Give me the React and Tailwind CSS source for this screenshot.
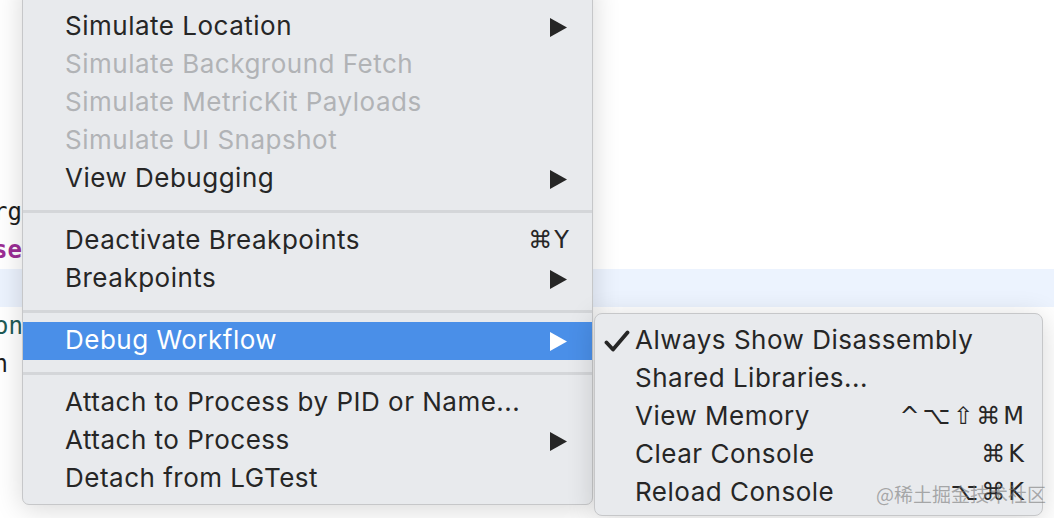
import React from 'react';

function Arrow({ white }) {
  return (
    <svg width="17" height="19" viewBox="0 0 17 19" className="shrink-0">
      <polygon points="0,0 17,9.5 0,19" fill={white ? '#ffffff' : '#262626'} />
    </svg>
  );
}

function Check() {
  return (
    <svg width="26" height="22" viewBox="0 0 26 22" className="shrink-0">
      <path d="M2.5 12.5 L9 19.5 L23.5 2.5" fill="none" stroke="#262626" strokeWidth="3.8" strokeLinecap="round" strokeLinejoin="round" />
    </svg>
  );
}

function MenuRow({ label, disabled, arrow, shortcut, active }) {
  return (
    <div
      className={`flex items-center h-[38px] pl-[42px] pr-[21px] ${active ? 'bg-[#4a8fe8] text-white' : disabled ? 'text-[#b1b3b6]' : 'text-[#262626]'}`}
    >
      <span className="flex-1 whitespace-nowrap pb-[3px]">{label}</span>
      {shortcut && <span className="font-['DejaVu_Sans',sans-serif] text-[24px] tracking-[2px] pb-[2px]">{shortcut}</span>}
      {arrow && <span className="pr-[4px]"><Arrow white={active} /></span>}
    </div>
  );
}

function Separator() {
  return (
    <div className="h-[24px] flex flex-col pt-[12px]">
      <div className="h-[3px] bg-[#d4d6d9]" />
    </div>
  );
}

function SubRow({ label, checked, shortcut }) {
  return (
    <div className="flex items-center h-[38px] pl-[9px] pr-[15px] text-[#262626]">
      <span className="w-[31px] flex">{checked && <Check />}</span>
      <span className="flex-1 whitespace-nowrap pb-[3px]">{label}</span>
      {shortcut && <span className="font-['DejaVu_Sans',sans-serif] text-[24px] tracking-[3px] pb-[2px]">{shortcut}</span>}
    </div>
  );
}

export default function App() {
  return (
    <div className="relative w-[1054px] h-[518px] overflow-hidden bg-white font-['Inter',sans-serif] text-[26px] tracking-[0.5px]">
      {/* Editor behind the menus */}
      <div className="flex flex-col pt-[193px] font-['DejaVu_Sans_Mono',monospace] text-[24px] tracking-normal">
        <div className="h-[38px] flex items-center"><span className="w-[22px] overflow-hidden flex justify-end text-[#1d1d1d]">arg</span></div>
        <div className="h-[38px] flex items-center"><span className="w-[22px] overflow-hidden flex justify-end font-bold text-[#9b2d95]">ase</span></div>
        <div className="h-[38px] bg-[#ecf3fe]" />
        <div className="h-[38px] flex items-center"><span className="w-[23px] overflow-hidden flex justify-end text-[#1f5b55]">ion</span></div>
        <div className="h-[38px] flex items-center"><span className="w-[8px] overflow-hidden flex justify-end text-[#1d1d1d]">n</span></div>
      </div>

      {/* Main menu */}
      <div className="absolute left-[22px] top-[-20px] w-[571px] pt-[27px] pb-[6px] bg-[#e8eaed] border border-[#c6c7c9] rounded-b-[7px] shadow-[0_4px_28px_rgba(0,0,0,0.16)]">
        <MenuRow label="Simulate Location" arrow />
        <MenuRow label="Simulate Background Fetch" disabled />
        <MenuRow label="Simulate MetricKit Payloads" disabled />
        <MenuRow label="Simulate UI Snapshot" disabled />
        <MenuRow label="View Debugging" arrow />
        <Separator />
        <MenuRow label="Deactivate Breakpoints" shortcut="⌘Y" />
        <MenuRow label="Breakpoints" arrow />
        <Separator />
        <MenuRow label="Debug Workflow" arrow active />
        <Separator />
        <MenuRow label="Attach to Process by PID or Name..." />
        <MenuRow label="Attach to Process" arrow />
        <MenuRow label="Detach from LGTest" />
      </div>

      {/* Submenu */}
      <div className="absolute left-[594px] top-[313px] w-[449px] pt-[8px] pb-[3px] bg-[#e8eaed] border border-[#c6c7c9] rounded-[8px] shadow-[0_4px_28px_rgba(0,0,0,0.16)]">
        <SubRow label="Always Show Disassembly" checked />
        <SubRow label="Shared Libraries..." />
        <SubRow label="View Memory" shortcut="^⌥⇧⌘M" />
        <SubRow label="Clear Console" shortcut="⌘K" />
        <SubRow label="Reload Console" shortcut="⌥⌘K" />
      </div>

      {/* Watermark */}
      <div className="absolute left-[876px] top-[480px] text-[19px] tracking-normal text-[rgba(120,120,120,0.6)] font-['Noto_Sans_CJK_SC',sans-serif] whitespace-nowrap">
        @稀土掘金技术社区
      </div>
    </div>
  );
}
